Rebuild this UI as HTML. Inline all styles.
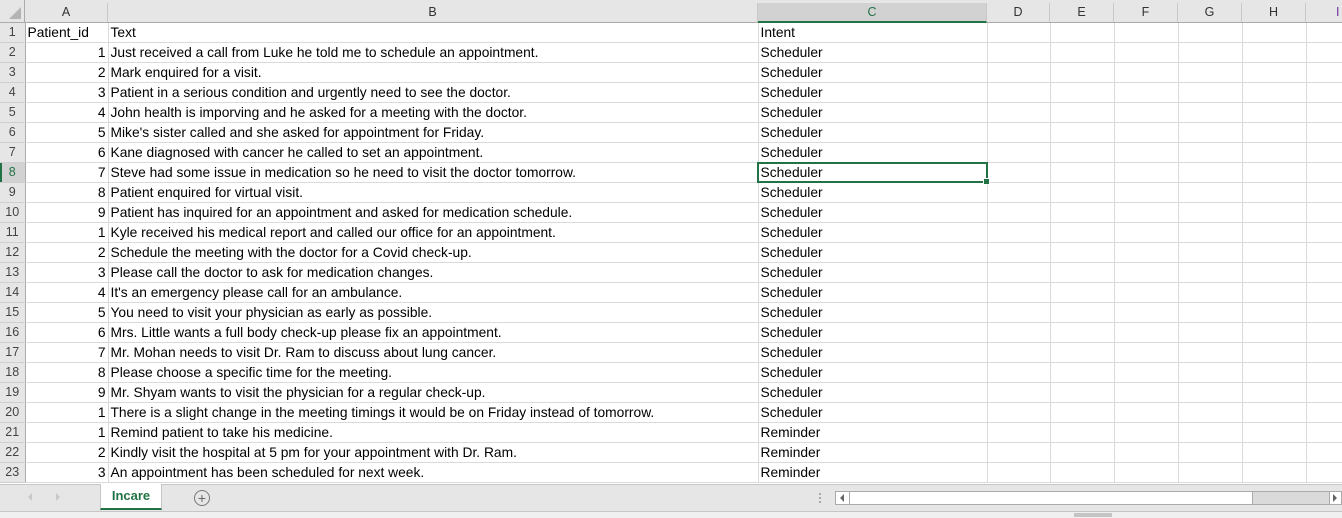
<!DOCTYPE html>
<html><head><style>
body{margin:0;width:1342px;height:517px;overflow:hidden;background:#fff;font-family:"Liberation Sans",sans-serif;position:relative}
.hdr{position:absolute;top:0;left:0;width:1342px;height:22px;background:#e6e6e6;border-bottom:1px solid #ababab}
.ch{position:absolute;top:3px;height:19px;line-height:19px;text-align:center;font-size:12.5px;color:#333;border-right:1px solid #c8c8c8;box-sizing:border-box}
table{position:absolute;top:23px;left:0;width:1370px;border-collapse:collapse;font-size:13.8px;table-layout:fixed}
td{height:19px;padding:0 0 0 2px;border-right:1px solid #dadada;border-bottom:1px solid #dadada;white-space:nowrap;overflow:hidden;line-height:19px;color:#000;box-sizing:border-box}
td.r{background:#e6e6e6;color:#444;text-align:center;border-right:1px solid #ababab;border-bottom:1px solid #cfcfcf;font-size:12.5px;padding:0}
td.n{text-align:right;padding:0 2px 0 0}
.sel{position:absolute;left:757px;top:162px;width:231px;height:21px;border:2px solid #217346;box-sizing:border-box}
.tabs{position:absolute;left:0;top:484px;width:1342px;height:26px;background:#e6e6e6;border-top:1px solid #c6c6c6}
</style></head><body>
<div class="hdr">
<div style="position:absolute;left:0;top:0;width:25px;height:22px;border-right:1px solid #ababab;box-sizing:border-box"><div style="position:absolute;right:3px;bottom:3px;width:0;height:0;border-left:12px solid transparent;border-bottom:12px solid #b4b4b4"></div></div>
<div class="ch" style="left:25px;width:83px">A</div>
<div class="ch" style="left:108px;width:650px">B</div>
<div class="ch" style="left:758px;width:229px;background:#d2d2d2;border-bottom:2px solid #217346;color:#217346;height:20px">C</div>
<div class="ch" style="left:987px;width:63px">D</div>
<div class="ch" style="left:1050px;width:64px">E</div>
<div class="ch" style="left:1114px;width:64px">F</div>
<div class="ch" style="left:1178px;width:64px">G</div>
<div class="ch" style="left:1242px;width:64px">H</div>
<div class="ch" style="left:1306px;width:64px;text-align:left;padding-left:30px;color:#7030a0">I</div>
</div>
<table>
<colgroup><col style="width:25px"><col style="width:83px"><col style="width:650px"><col style="width:229px"><col style="width:63px"><col style="width:64px"><col style="width:64px"><col style="width:64px"><col style="width:64px"><col style="width:64px"></colgroup>
<tr><td class="r">1</td><td>Patient_id</td><td>Text</td><td>Intent</td><td></td><td></td><td></td><td></td><td></td><td></td></tr>
<tr><td class="r">2</td><td class="n">1</td><td>Just received a call from Luke he told me to schedule an appointment.</td><td>Scheduler</td><td></td><td></td><td></td><td></td><td></td><td></td></tr>
<tr><td class="r">3</td><td class="n">2</td><td>Mark enquired for a visit.</td><td>Scheduler</td><td></td><td></td><td></td><td></td><td></td><td></td></tr>
<tr><td class="r">4</td><td class="n">3</td><td>Patient in a serious condition and urgently need to see the doctor.</td><td>Scheduler</td><td></td><td></td><td></td><td></td><td></td><td></td></tr>
<tr><td class="r">5</td><td class="n">4</td><td>John health is imporving and he asked for a meeting with the doctor.</td><td>Scheduler</td><td></td><td></td><td></td><td></td><td></td><td></td></tr>
<tr><td class="r">6</td><td class="n">5</td><td>Mike's sister called and she asked for appointment for Friday.</td><td>Scheduler</td><td></td><td></td><td></td><td></td><td></td><td></td></tr>
<tr><td class="r">7</td><td class="n">6</td><td>Kane diagnosed with cancer he called to set an appointment.</td><td>Scheduler</td><td></td><td></td><td></td><td></td><td></td><td></td></tr>
<tr><td class="r" style="background:#d2d2d2;color:#217346;box-shadow:inset 2px 0 0 #217346">8</td><td class="n">7</td><td>Steve had some issue in medication so he need to visit the doctor tomorrow.</td><td>Scheduler</td><td></td><td></td><td></td><td></td><td></td><td></td></tr>
<tr><td class="r">9</td><td class="n">8</td><td>Patient enquired for virtual visit.</td><td>Scheduler</td><td></td><td></td><td></td><td></td><td></td><td></td></tr>
<tr><td class="r">10</td><td class="n">9</td><td>Patient has inquired for an appointment and asked for medication schedule.</td><td>Scheduler</td><td></td><td></td><td></td><td></td><td></td><td></td></tr>
<tr><td class="r">11</td><td class="n">1</td><td>Kyle received his medical report and called our office for an appointment.</td><td>Scheduler</td><td></td><td></td><td></td><td></td><td></td><td></td></tr>
<tr><td class="r">12</td><td class="n">2</td><td>Schedule the meeting with the doctor for a Covid check-up.</td><td>Scheduler</td><td></td><td></td><td></td><td></td><td></td><td></td></tr>
<tr><td class="r">13</td><td class="n">3</td><td>Please call the doctor to ask for medication changes.</td><td>Scheduler</td><td></td><td></td><td></td><td></td><td></td><td></td></tr>
<tr><td class="r">14</td><td class="n">4</td><td>It's an emergency please call for an ambulance.</td><td>Scheduler</td><td></td><td></td><td></td><td></td><td></td><td></td></tr>
<tr><td class="r">15</td><td class="n">5</td><td>You need to visit your physician as early as possible.</td><td>Scheduler</td><td></td><td></td><td></td><td></td><td></td><td></td></tr>
<tr><td class="r">16</td><td class="n">6</td><td>Mrs. Little wants a full body check-up please fix an appointment.</td><td>Scheduler</td><td></td><td></td><td></td><td></td><td></td><td></td></tr>
<tr><td class="r">17</td><td class="n">7</td><td>Mr. Mohan needs to visit Dr. Ram to discuss about lung cancer.</td><td>Scheduler</td><td></td><td></td><td></td><td></td><td></td><td></td></tr>
<tr><td class="r">18</td><td class="n">8</td><td>Please choose a specific time for the meeting.</td><td>Scheduler</td><td></td><td></td><td></td><td></td><td></td><td></td></tr>
<tr><td class="r">19</td><td class="n">9</td><td>Mr. Shyam wants to visit the physician for a regular check-up.</td><td>Scheduler</td><td></td><td></td><td></td><td></td><td></td><td></td></tr>
<tr><td class="r">20</td><td class="n">1</td><td>There is a slight change in the meeting timings it would be on Friday instead of tomorrow.</td><td>Scheduler</td><td></td><td></td><td></td><td></td><td></td><td></td></tr>
<tr><td class="r">21</td><td class="n">1</td><td>Remind patient to take his medicine.</td><td>Reminder</td><td></td><td></td><td></td><td></td><td></td><td></td></tr>
<tr><td class="r">22</td><td class="n">2</td><td>Kindly visit the hospital at 5 pm for your appointment with Dr. Ram.</td><td>Reminder</td><td></td><td></td><td></td><td></td><td></td><td></td></tr>
<tr><td class="r">23</td><td class="n">3</td><td>An appointment has been scheduled for next week.</td><td>Reminder</td><td></td><td></td><td></td><td></td><td></td><td></td></tr>
</table>
<div class="sel"><div style="position:absolute;right:-4px;bottom:-4px;width:5px;height:5px;background:#217346;border:1px solid #fff"></div></div>
<div class="tabs">
<div style="position:absolute;left:28px;top:8px;width:0;height:0;border-right:4px solid #c8c8c8;border-top:4px solid transparent;border-bottom:4px solid transparent"></div>
<div style="position:absolute;left:56px;top:8px;width:0;height:0;border-left:4px solid #c8c8c8;border-top:4px solid transparent;border-bottom:4px solid transparent"></div>
<div style="position:absolute;left:100px;top:-1px;width:60px;height:24px;background:#fff;border:1px solid #c6c6c6;border-top:none;border-bottom:2px solid #217346;text-align:center;line-height:24px;font-weight:bold;font-size:13px;color:#217346">Incare</div>
<div style="position:absolute;left:194px;top:5px;width:14px;height:14px;border:1px solid #777;border-radius:50%;text-align:center;line-height:14px;font-size:14px;color:#666">+</div>
<div style="position:absolute;left:819px;top:8px;width:2px;height:10px;border-left:2px dotted #aaa"></div>
<div style="position:absolute;left:835px;top:6px;width:507px;height:14px;background:#dadada;border:1px solid #aaa;box-sizing:border-box"></div>
<div style="position:absolute;left:835px;top:6px;width:418px;height:14px;background:#fff;border:1px solid #aaa;box-sizing:border-box"></div>
<div style="position:absolute;left:835px;top:6px;width:15px;height:14px;border-right:1px solid #aaa;box-sizing:border-box"></div>
<div style="position:absolute;left:840px;top:9px;width:0;height:0;border-right:4px solid #666;border-top:4px solid transparent;border-bottom:4px solid transparent"></div>
<div style="position:absolute;left:1329px;top:6px;width:13px;height:14px;background:#fff;border:1px solid #aaa;box-sizing:border-box"></div>
<div style="position:absolute;left:1333px;top:9px;width:0;height:0;border-left:4px solid #666;border-top:4px solid transparent;border-bottom:4px solid transparent"></div>
</div>
<div style="position:absolute;left:0;top:511px;width:1342px;height:6px;background:#f0f0f0;border-top:1px solid #c6c6c6"></div>
<div style="position:absolute;left:1074px;top:513px;width:38px;height:4px;background:#c4c4c4"></div>
</body></html>
